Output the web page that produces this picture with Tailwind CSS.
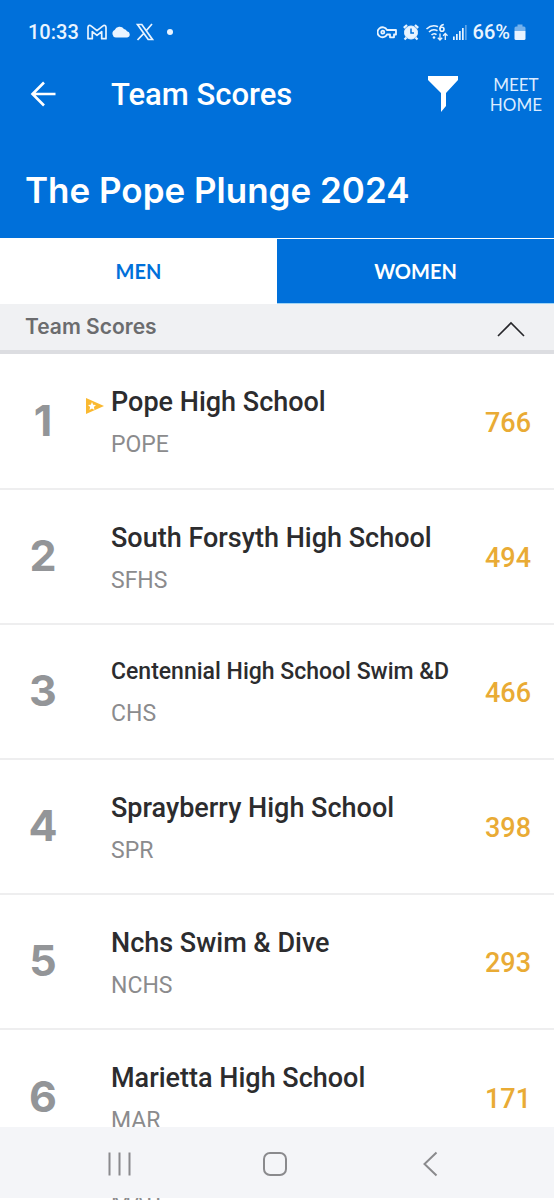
<!doctype html>
<html lang="en">
  <head>
    <meta charset="UTF-8" />
    <meta name="viewport" content="width=device-width, initial-scale=1.0" />
    <title>Team Scores</title>
    <script src="https://cdn.jsdelivr.net/npm/@tailwindcss/browser@4"></script>
  </head>
  <body class="h-screen flex flex-col overflow-hidden bg-white font-[Roboto,sans-serif]">
    <header class="shrink-0 bg-[#0070da] text-white">
      <!-- status bar -->
      <div class="flex h-16 items-center justify-between px-7 text-[#e9f4ff]">
        <div class="flex items-center gap-1">
          <span class="mr-1 text-[20px] leading-6 font-medium">10:33</span>
          <svg class="h-5 w-5" viewBox="0 0 20 20" fill="none" stroke="currentColor" stroke-width="1.7" stroke-linejoin="round"><path d="M1 16.700V5.500C1 3.500 2.700 2.800 4 3.900L10 8.600L16 3.900C17.300 2.800 19 3.500 19 5.500V16.700H14.700V9.600L10 13.300L5.300 9.600V16.700Z"/></svg>
          <svg class="h-5 w-5" viewBox="0 0 20 20" fill="currentColor"><path d="M4.800 15.500A4 4 0 0 1 3.600 8A5.400 5.400 0 0 1 13 7A4 4 0 0 1 16 9.200A3.200 3.200 0 0 1 16.200 15.500Z"/></svg>
          <svg class="h-5 w-5" viewBox="0 0 20 20" fill="none" stroke="currentColor" stroke-width="1.700"><path d="M2.500 2.500H6.800L17.500 17.500H13.200ZM17 2L11.200 8.700M8.800 11.300L2.500 18"/></svg>
          <span class="ml-2 h-[6px] w-[6px] rounded-full bg-current"></span>
        </div>
        <div class="flex items-center">
          <svg class="h-5 w-5" viewBox="0 0 20 20" fill="none" stroke="currentColor" stroke-width="1.800" stroke-linejoin="round"><path d="M10 8A5 5 0 1 0 10 12.500H13V15.300H17V12.500H19V8Z"/><circle cx="5.800" cy="10.200" r="1.500"/></svg>
          <svg class="ml-1 h-5 w-5" viewBox="0 0 20 20" fill="none" stroke="currentColor"><circle cx="10" cy="10.500" r="6.500" fill="currentColor"/><path stroke-width="2.200" d="M2.800 5.800L6 3M17.200 5.800L14 3M5.500 15.500L3.500 17.500M14.500 15.500L16.500 17.500"/><path class="stroke-[#0070da]" stroke-width="1.500" d="M10 6.500V11H13"/></svg>
          <svg class="ml-1 h-5 w-6" viewBox="0 0 24 20" fill="none" stroke="currentColor" stroke-width="1.600"><path d="M1.500 7Q7 2 13 4.800M4 10Q8 6.200 12.500 8.800M6.500 13Q9 10.600 11.500 12.700"/><circle cx="9" cy="15.500" r="1.300" fill="currentColor" stroke="none"/><circle cx="17" cy="7.300" r="2"/><path d="M18.800 2.500Q15 3 15 7.300"/><path stroke-width="1.300" d="M15 11.500V18M12.800 15.800L15 18L17.200 15.800M20.300 18V11.500M18.100 13.700L20.300 11.500L22.500 13.700"/></svg>
          <svg class="ml-1 h-5 w-4" viewBox="0 0 16 20" fill="currentColor"><path d="M0 14.500H1.700V18H0ZM3 12H4.700V18H3ZM6 9H7.700V18H6ZM9 6H10.700V18H9Z"/><path opacity=".4" d="M12 3H13.700V18H12Z"/></svg>
          <span class="ml-1 text-[20px] leading-6 font-medium">66%</span>
          <svg class="ml-1 h-5 w-3" viewBox="0 0 12 20" fill="currentColor"><path opacity=".5" d="M3.500 2.500H8.500V4.500H10Q11.500 4.500 11.500 6V9H.5V6Q.5 4.500 2 4.500H3.500Z"/><path d="M.5 9H11.500V16.500Q11.500 18 10 18H2Q.5 18 .5 16.500Z"/></svg>
        </div>
      </div>

      <!-- app bar -->
      <div class="flex h-[60px] items-center pl-[30px] pr-3">
        <button type="button" aria-label="Back">
          <svg class="h-[26px] w-[26px]" viewBox="0 0 26 26" fill="none" stroke="currentColor" stroke-width="2.600"><path d="M25.500 13H2.500M14 1.500L2.500 13L14 24.500"/></svg>
        </button>
        <h1 class="ml-[55px] flex-1 pt-[2px] text-[31px] leading-9 font-medium">Team Scores</h1>
        <button type="button" aria-label="Filter">
          <svg class="h-9 w-[30px]" viewBox="0 0 30 36" fill="currentColor"><path d="M0 0H30V4L18 17V30L13 36V17L0 4Z"/></svg>
        </button>
        <a href="#" class="ml-8 pt-[2px] text-center font-[Lato,sans-serif] text-[17px] leading-5 text-[#dcecff]">MEET<br />HOME</a>
      </div>

      <h2 class="px-[25px] pt-[54px] pb-9 font-[Inter,sans-serif] text-[35px] leading-6 font-semibold">The Pope Plunge 2024</h2>
    </header>

    <nav class="grid h-[66px] shrink-0 grid-cols-2 font-[Lato,sans-serif] text-[20px] font-bold">
      <button type="button" class="bg-white text-[#0070da]">MEN</button>
      <button type="button" class="border-t border-b border-t-white border-b-[#9fd4f5] bg-[#0070da] text-white">WOMEN</button>
    </nav>

    <button type="button" class="flex h-[50px] shrink-0 items-center justify-between border-b-4 border-[#dcdde1] bg-[#f0f1f3] pl-[25px] pr-[29px] text-[#6b6c6e]">
      <span class="font-[Inter,sans-serif] text-[21px] leading-7 font-semibold">Team Scores</span>
      <svg class="mt-1 h-4 w-7" viewBox="0 0 28 16" fill="none" stroke="#26262a" stroke-width="1.600"><path d="M1 15L14 2L27 15"/></svg>
    </button>

    <main class="min-h-0 flex-1 overflow-hidden">
      <table class="w-full text-left">
        <tbody>
          <tr class="h-[135px] border-b-2 border-[#eeeeef]">
            <td class="w-[86px] pb-[2px] text-center font-[Inter,sans-serif] text-[43px] font-bold text-[#939598]">1</td>
            <td class="w-[25px] pt-[43px] align-top">
              <svg class="h-[18px] w-[18px]" viewBox="0 0 18 18"><path fill="#fab931" d="M0 1L18 9L0 17Z"/><path fill="#fff" d="M6 5L7.200 7.700L10 8L7.900 10L8.500 13L6 11.500L3.500 13L4.100 10L2 8L4.800 7.700Z"/></svg>
            </td>
            <td class="pt-8 align-top">
              <p class="text-[27px] leading-8 font-medium text-[#2c2c2e]">Pope High School</p>
              <p class="mt-[13px] text-[23px] leading-7 text-[#8b8b8d]">POPE</p>
            </td>
            <td class="pr-[23px] pt-1 text-right text-[27px] font-medium text-[#e9ab35]">766</td>
          </tr>
          <tr class="h-[135px] border-b-2 border-[#eeeeef]">
            <td class="w-[86px] pb-[2px] text-center font-[Inter,sans-serif] text-[43px] font-bold text-[#939598]">2</td>
            <td></td>
            <td class="pt-8 align-top">
              <p class="text-[27px] leading-8 font-medium text-[#2c2c2e]">South Forsyth High School</p>
              <p class="mt-[13px] text-[23px] leading-7 text-[#8b8b8d]">SFHS</p>
            </td>
            <td class="pr-[23px] pt-1 text-right text-[27px] font-medium text-[#e9ab35]">494</td>
          </tr>
          <tr class="h-[135px] border-b-2 border-[#eeeeef]">
            <td class="w-[86px] pb-[2px] text-center font-[Inter,sans-serif] text-[43px] font-bold text-[#939598]">3</td>
            <td></td>
            <td class="pt-8 align-top">
              <p class="text-[23px] leading-[30px] font-medium text-[#2c2c2e]">Centennial High School Swim &amp;D</p>
              <p class="mt-[13px] text-[23px] leading-7 text-[#8b8b8d]">CHS</p>
            </td>
            <td class="pr-[23px] pt-1 text-right text-[27px] font-medium text-[#e9ab35]">466</td>
          </tr>
          <tr class="h-[135px] border-b-2 border-[#eeeeef]">
            <td class="w-[86px] pb-[2px] text-center font-[Inter,sans-serif] text-[43px] font-bold text-[#939598]">4</td>
            <td></td>
            <td class="pt-8 align-top">
              <p class="text-[27px] leading-8 font-medium text-[#2c2c2e]">Sprayberry High School</p>
              <p class="mt-[13px] text-[23px] leading-7 text-[#8b8b8d]">SPR</p>
            </td>
            <td class="pr-[23px] pt-1 text-right text-[27px] font-medium text-[#e9ab35]">398</td>
          </tr>
          <tr class="h-[135px] border-b-2 border-[#eeeeef]">
            <td class="w-[86px] pb-[2px] text-center font-[Inter,sans-serif] text-[43px] font-bold text-[#939598]">5</td>
            <td></td>
            <td class="pt-8 align-top">
              <p class="text-[27px] leading-8 font-medium text-[#2c2c2e]">Nchs Swim &amp; Dive</p>
              <p class="mt-[13px] text-[23px] leading-7 text-[#8b8b8d]">NCHS</p>
            </td>
            <td class="pr-[23px] pt-1 text-right text-[27px] font-medium text-[#e9ab35]">293</td>
          </tr>
          <tr class="h-[135px]">
            <td class="w-[86px] pb-[2px] text-center font-[Inter,sans-serif] text-[43px] font-bold text-[#939598]">6</td>
            <td></td>
            <td class="pt-8 align-top">
              <p class="text-[27px] leading-8 font-medium text-[#2c2c2e]">Marietta High School</p>
              <p class="mt-[13px] text-[23px] leading-7 text-[#8b8b8d]">MAR</p>
            </td>
            <td class="pr-[23px] pt-1 text-right text-[27px] font-medium text-[#e9ab35]">171</td>
          </tr>
        </tbody>
      </table>
    </main>

    <!-- system navigation -->
    <footer class="shrink-0">
      <div class="flex h-[71px] items-center justify-between bg-[#f4f5f8] pt-[2px] pl-[107px] pr-[116px] text-[#8a8a8d]">
        <button type="button" aria-label="Recent apps">
          <svg class="h-7 w-6" viewBox="0 0 24 28" fill="none" stroke="currentColor" stroke-width="2"><path d="M2.500 2.500V25.500M12.500 2.500V25.500M22.500 2.500V25.500"/></svg>
        </button>
        <button type="button" aria-label="Home">
          <svg class="h-7 w-7" viewBox="0 0 28 28" fill="none" stroke="currentColor" stroke-width="2"><rect x="3" y="3" width="22" height="22" rx="6"/></svg>
        </button>
        <button type="button" aria-label="Back">
          <svg class="h-7 w-5" viewBox="-4 0 20 28" fill="none" stroke="currentColor" stroke-width="2"><path d="M14.500 2.500L2.500 14L14.500 25.500"/></svg>
        </button>
      </div>
      <div class="h-[2px] overflow-hidden bg-white pl-[111px] text-[23px] leading-3 text-[#8b8b8d]">MAR</div>
    </footer>
  </body>
</html>
